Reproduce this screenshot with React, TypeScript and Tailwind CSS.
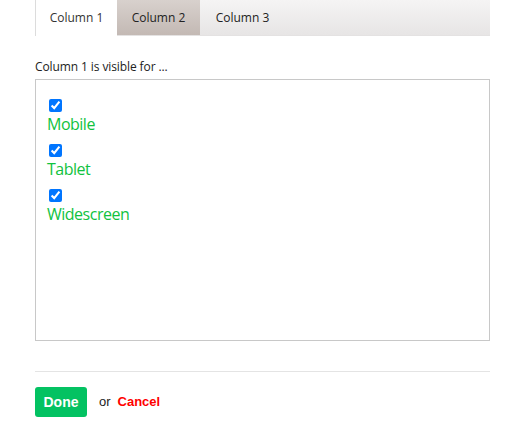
import React, { useState } from 'react';

const tabs = ['Column 1', 'Column 2', 'Column 3'];
const devices = ['Mobile', 'Tablet', 'Widescreen'];

const App: React.FC = () => {
  const [active, setActive] = useState(0);
  const [checked, setChecked] = useState<boolean[]>([true, true, true]);

  const toggle = (i: number) => {
    setChecked((prev) => prev.map((v, idx) => (idx === i ? !v : v)));
  };

  return (
    <div className="w-[525px] h-[447px] bg-white font-['Open_Sans',sans-serif] text-[#222]">
      <div className="ml-[35px] w-[455px]">
        {/* tabs */}
        <div className="flex h-[36px] bg-gradient-to-b from-[#f5f4f4] to-[#e7e5e5] border-b border-[#e4e2e2]">
          {tabs.map((t, i) => (
            <button
              key={t}
              onClick={() => setActive(i)}
              className={
                i === active
                  ? 'h-[36px] w-[82px] whitespace-nowrap bg-white border-l border-[#dcdcdc] text-[12px] text-[#333] -mb-px'
                  : i === 1
                  ? 'h-[35px] w-[83px] whitespace-nowrap bg-gradient-to-b from-[#d8d1cd] to-[#c3b9b4] text-[12px] text-[#222]'
                  : 'h-[35px] w-[85px] whitespace-nowrap text-[12px] text-[#222]'
              }
            >
              {t}
            </button>
          ))}
        </div>

        <p className="mt-[23px] text-[12px] leading-[16px] tracking-[-0.1px] text-[#222]">
          Column {active + 1} is visible for ...
        </p>

        <div className="mt-[4px] h-[262px] border border-[#c8c8c8] pt-[19px] pl-[12px]">
          {devices.map((d, i) => (
            <label key={d} className="block mb-[8px] cursor-pointer">
              <input
                type="checkbox"
                checked={checked[i]}
                onChange={() => toggle(i)}
                className="block w-[13px] h-[13px] ml-[1px] m-0"
              />
              <span className="block -ml-px text-[16px] leading-[24px] tracking-[-0.5px] text-[#10c23e]">{d}</span>
            </label>
          ))}
        </div>

        <div className="mt-[30px] border-t border-[#e4e4e4]" />

        <div className="mt-[15px] flex items-center">
          <button className="h-[30px] w-[52px] rounded-[3px] bg-[#03c262] text-white font-['Liberation_Sans',sans-serif] font-bold text-[14px]">
            Done
          </button>
          <span className="ml-[12px] font-['Liberation_Sans',sans-serif] text-[13px] text-[#222]">or</span>
          <a href="#" className="ml-[7px] font-['Liberation_Sans',sans-serif] font-bold text-[13px] text-[#ff0000]">
            Cancel
          </a>
        </div>
      </div>
    </div>
  );
};

export default App;
